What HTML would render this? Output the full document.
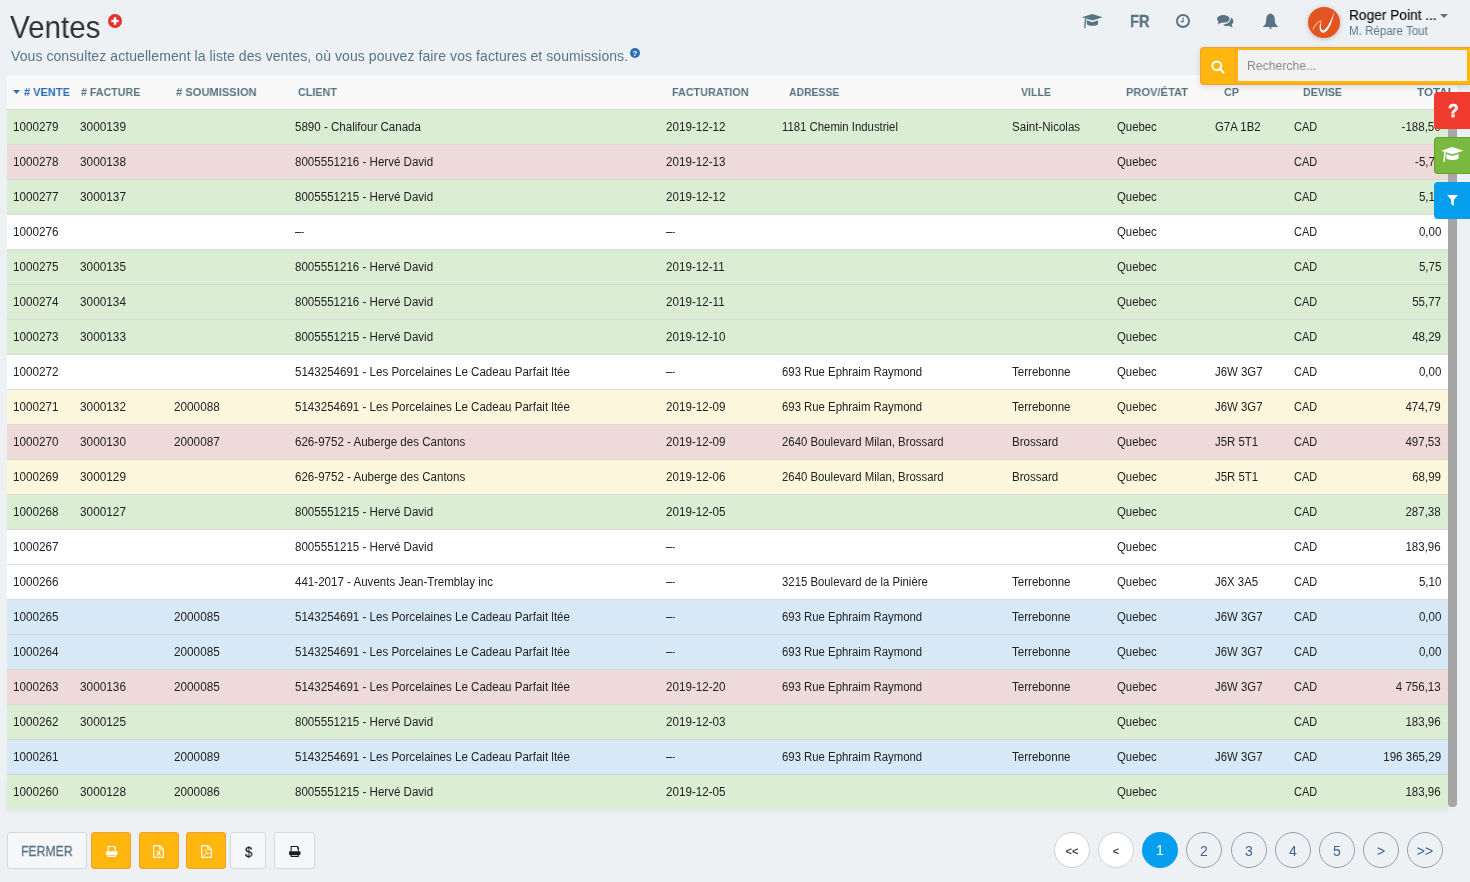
<!DOCTYPE html>
<html><head><meta charset="utf-8"><title>Ventes</title>
<style>
*{box-sizing:border-box}
html,body{margin:0;padding:0}
body{width:1470px;height:882px;overflow:hidden;background:#edf1f4;font-family:"Liberation Sans",sans-serif;position:relative;color:#222}
.a{position:absolute;white-space:nowrap;will-change:transform}
.row,.pg{will-change:transform}
.title{left:9.5px;top:9.2px;font-size:31.5px;line-height:36px;color:#333;transform:scaleX(0.94);transform-origin:0 0}
.sub{left:11px;top:47px;font-size:14px;line-height:18px;color:#587585;letter-spacing:0.08px}
.hdr{left:7px;top:75px;width:1450px;height:35px;background:#f9f9f9;border-bottom:1px solid #d6d6d6}
.hl{top:85px;font-size:11.7px;line-height:14px;font-weight:bold;color:#587382;transform-origin:0 0}
.row{position:absolute;left:7px;width:1441px;height:35px;border-bottom:1px solid #d9d9d9}
.g{background:#dbedd3}.r{background:#efdada}.y{background:#fbf6dc}.b{background:#d7e9f6}.w{background:#ffffff}
.c{position:absolute;top:10px;font-size:12px;line-height:14px;color:#222;white-space:nowrap;transform-origin:0 0}
.dash{position:absolute;top:7px;left:0;width:9px;height:1px;background:linear-gradient(90deg,#333 0,#333 6px,#999 6px,#999 7px,#333 7px)}
.tot{right:7px;text-align:right;transform:scaleX(0.962);transform-origin:100% 0}
.sb{left:1448px;top:110px;width:9px;height:697px;background:#a6a6a6;border-radius:0 0 4px 4px}
.btn{position:absolute;top:832px;height:37px;border-radius:3px}
.bw{background:#f5f7f9;border:1px solid #d3d9dd}
.bo{background:#ffb60f;border:1px solid #f0a032}
.pg{position:absolute;top:832px;width:36px;height:36px;border-radius:50%;text-align:center;line-height:36px;font-size:14px}
.pw{background:#fff;border:1px solid #d0d0d0;color:#444;font-weight:bold;font-size:11px}
.pn{border:1px solid #8fa0aa;color:#3f6190}
.pa{background:#069ff0;color:#fff}
.side{position:absolute;left:1434px;width:36px;height:37px;border-radius:4px 0 0 4px}
</style></head><body>
<div class="a title">Ventes</div>
<svg class="a" style="left:108.4px;top:14.1px" width="14" height="14" viewBox="0 0 14 14"><circle cx="7" cy="7" r="7" fill="#e8302c"/><rect x="3.2" y="5.8" width="7.6" height="2.4" fill="#fff"/><rect x="5.8" y="3.2" width="2.4" height="7.6" fill="#fff"/></svg>
<div class="a sub">Vous consultez actuellement la liste des ventes, où vous pouvez faire vos factures et soumissions.</div>
<svg class="a" style="left:630px;top:48px" width="10" height="10" viewBox="0 0 10 10"><circle cx="5" cy="5" r="5" fill="#2f6db5"/><text x="5" y="8.3" font-size="8" font-weight="bold" text-anchor="middle" fill="#fff" font-family="Liberation Sans">?</text></svg>
<div class="a hdr"></div>
<svg class="a" style="left:13px;top:90px" width="7" height="4" viewBox="0 0 7 4"><path d="M0 0H7L3.5 4Z" fill="#2f6db5"/></svg>
<div class="a hl" style="left:24.00px;color:#2f6db5;transform:scaleX(0.943)"># VENTE</div>
<div class="a hl" style="left:81.00px;color:#587382;transform:scaleX(0.912)"># FACTURE</div>
<div class="a hl" style="left:176.00px;color:#587382;transform:scaleX(0.954)"># SOUMISSION</div>
<div class="a hl" style="left:298.00px;color:#587382;transform:scaleX(0.924)">CLIENT</div>
<div class="a hl" style="left:672.00px;color:#587382;transform:scaleX(0.924)">FACTURATION</div>
<div class="a hl" style="left:789.00px;color:#587382;transform:scaleX(0.889)">ADRESSE</div>
<div class="a hl" style="left:1021.00px;color:#587382;transform:scaleX(0.904)">VILLE</div>
<div class="a hl" style="left:1126.00px;color:#587382;transform:scaleX(0.951)">PROV/ÉTAT</div>
<div class="a hl" style="left:1224.00px;color:#587382;transform:scaleX(0.920)">CP</div>
<div class="a hl" style="left:1303.00px;color:#587382;transform:scaleX(0.909)">DEVISE</div>
<div class="a hl" style="left:1417px">TOTAL</div>
<div class="row g" style="top:110px"><div class="c" style="left:6px;transform:scaleX(0.975)">1000279</div><div class="c" style="left:73px;transform:scaleX(0.985)">3000139</div><div class="c" style="left:288px;transform:scaleX(0.963)">5890 - Chalifour Canada</div><div class="c" style="left:659px;transform:scaleX(0.97)">2019-12-12</div><div class="c" style="left:775px;transform:scaleX(0.946)">1181 Chemin Industriel</div><div class="c" style="left:1005px;transform:scaleX(0.964)">Saint-Nicolas</div><div class="c" style="left:1110px;transform:scaleX(0.947)">Quebec</div><div class="c" style="left:1208px;transform:scaleX(0.95)">G7A 1B2</div><div class="c" style="left:1287px;transform:scaleX(0.91)">CAD</div><div class="c tot">-188,50</div></div>
<div class="row r" style="top:145px"><div class="c" style="left:6px;transform:scaleX(0.975)">1000278</div><div class="c" style="left:73px;transform:scaleX(0.985)">3000138</div><div class="c" style="left:288px;transform:scaleX(0.963)">8005551216 - Hervé David</div><div class="c" style="left:659px;transform:scaleX(0.97)">2019-12-13</div><div class="c" style="left:1110px;transform:scaleX(0.947)">Quebec</div><div class="c" style="left:1287px;transform:scaleX(0.91)">CAD</div><div class="c tot">-5,75</div></div>
<div class="row g" style="top:180px"><div class="c" style="left:6px;transform:scaleX(0.975)">1000277</div><div class="c" style="left:73px;transform:scaleX(0.985)">3000137</div><div class="c" style="left:288px;transform:scaleX(0.963)">8005551215 - Hervé David</div><div class="c" style="left:659px;transform:scaleX(0.97)">2019-12-12</div><div class="c" style="left:1110px;transform:scaleX(0.947)">Quebec</div><div class="c" style="left:1287px;transform:scaleX(0.91)">CAD</div><div class="c tot">5,10</div></div>
<div class="row w" style="top:215px"><div class="c" style="left:6px;transform:scaleX(0.975)">1000276</div><div class="c" style="left:288px;transform:scaleX(0.963)"><span class="dash"></span></div><div class="c" style="left:659px;transform:scaleX(0.97)"><span class="dash"></span></div><div class="c" style="left:1110px;transform:scaleX(0.947)">Quebec</div><div class="c" style="left:1287px;transform:scaleX(0.91)">CAD</div><div class="c tot">0,00</div></div>
<div class="row g" style="top:250px"><div class="c" style="left:6px;transform:scaleX(0.975)">1000275</div><div class="c" style="left:73px;transform:scaleX(0.985)">3000135</div><div class="c" style="left:288px;transform:scaleX(0.963)">8005551216 - Hervé David</div><div class="c" style="left:659px;transform:scaleX(0.97)">2019-12-11</div><div class="c" style="left:1110px;transform:scaleX(0.947)">Quebec</div><div class="c" style="left:1287px;transform:scaleX(0.91)">CAD</div><div class="c tot">5,75</div></div>
<div class="row g" style="top:285px"><div class="c" style="left:6px;transform:scaleX(0.975)">1000274</div><div class="c" style="left:73px;transform:scaleX(0.985)">3000134</div><div class="c" style="left:288px;transform:scaleX(0.963)">8005551216 - Hervé David</div><div class="c" style="left:659px;transform:scaleX(0.97)">2019-12-11</div><div class="c" style="left:1110px;transform:scaleX(0.947)">Quebec</div><div class="c" style="left:1287px;transform:scaleX(0.91)">CAD</div><div class="c tot">55,77</div></div>
<div class="row g" style="top:320px"><div class="c" style="left:6px;transform:scaleX(0.975)">1000273</div><div class="c" style="left:73px;transform:scaleX(0.985)">3000133</div><div class="c" style="left:288px;transform:scaleX(0.963)">8005551215 - Hervé David</div><div class="c" style="left:659px;transform:scaleX(0.97)">2019-12-10</div><div class="c" style="left:1110px;transform:scaleX(0.947)">Quebec</div><div class="c" style="left:1287px;transform:scaleX(0.91)">CAD</div><div class="c tot">48,29</div></div>
<div class="row w" style="top:355px"><div class="c" style="left:6px;transform:scaleX(0.975)">1000272</div><div class="c" style="left:288px;transform:scaleX(0.963)">5143254691 - Les Porcelaines Le Cadeau Parfait ltée</div><div class="c" style="left:659px;transform:scaleX(0.97)"><span class="dash"></span></div><div class="c" style="left:775px;transform:scaleX(0.946)">693 Rue Ephraim Raymond</div><div class="c" style="left:1005px;transform:scaleX(0.964)">Terrebonne</div><div class="c" style="left:1110px;transform:scaleX(0.947)">Quebec</div><div class="c" style="left:1208px;transform:scaleX(0.95)">J6W 3G7</div><div class="c" style="left:1287px;transform:scaleX(0.91)">CAD</div><div class="c tot">0,00</div></div>
<div class="row y" style="top:390px"><div class="c" style="left:6px;transform:scaleX(0.975)">1000271</div><div class="c" style="left:73px;transform:scaleX(0.985)">3000132</div><div class="c" style="left:167px;transform:scaleX(0.98)">2000088</div><div class="c" style="left:288px;transform:scaleX(0.963)">5143254691 - Les Porcelaines Le Cadeau Parfait ltée</div><div class="c" style="left:659px;transform:scaleX(0.97)">2019-12-09</div><div class="c" style="left:775px;transform:scaleX(0.946)">693 Rue Ephraim Raymond</div><div class="c" style="left:1005px;transform:scaleX(0.964)">Terrebonne</div><div class="c" style="left:1110px;transform:scaleX(0.947)">Quebec</div><div class="c" style="left:1208px;transform:scaleX(0.95)">J6W 3G7</div><div class="c" style="left:1287px;transform:scaleX(0.91)">CAD</div><div class="c tot">474,79</div></div>
<div class="row r" style="top:425px"><div class="c" style="left:6px;transform:scaleX(0.975)">1000270</div><div class="c" style="left:73px;transform:scaleX(0.985)">3000130</div><div class="c" style="left:167px;transform:scaleX(0.98)">2000087</div><div class="c" style="left:288px;transform:scaleX(0.963)">626-9752 - Auberge des Cantons</div><div class="c" style="left:659px;transform:scaleX(0.97)">2019-12-09</div><div class="c" style="left:775px;transform:scaleX(0.946)">2640 Boulevard Milan, Brossard</div><div class="c" style="left:1005px;transform:scaleX(0.964)">Brossard</div><div class="c" style="left:1110px;transform:scaleX(0.947)">Quebec</div><div class="c" style="left:1208px;transform:scaleX(0.95)">J5R 5T1</div><div class="c" style="left:1287px;transform:scaleX(0.91)">CAD</div><div class="c tot">497,53</div></div>
<div class="row y" style="top:460px"><div class="c" style="left:6px;transform:scaleX(0.975)">1000269</div><div class="c" style="left:73px;transform:scaleX(0.985)">3000129</div><div class="c" style="left:288px;transform:scaleX(0.963)">626-9752 - Auberge des Cantons</div><div class="c" style="left:659px;transform:scaleX(0.97)">2019-12-06</div><div class="c" style="left:775px;transform:scaleX(0.946)">2640 Boulevard Milan, Brossard</div><div class="c" style="left:1005px;transform:scaleX(0.964)">Brossard</div><div class="c" style="left:1110px;transform:scaleX(0.947)">Quebec</div><div class="c" style="left:1208px;transform:scaleX(0.95)">J5R 5T1</div><div class="c" style="left:1287px;transform:scaleX(0.91)">CAD</div><div class="c tot">68,99</div></div>
<div class="row g" style="top:495px"><div class="c" style="left:6px;transform:scaleX(0.975)">1000268</div><div class="c" style="left:73px;transform:scaleX(0.985)">3000127</div><div class="c" style="left:288px;transform:scaleX(0.963)">8005551215 - Hervé David</div><div class="c" style="left:659px;transform:scaleX(0.97)">2019-12-05</div><div class="c" style="left:1110px;transform:scaleX(0.947)">Quebec</div><div class="c" style="left:1287px;transform:scaleX(0.91)">CAD</div><div class="c tot">287,38</div></div>
<div class="row w" style="top:530px"><div class="c" style="left:6px;transform:scaleX(0.975)">1000267</div><div class="c" style="left:288px;transform:scaleX(0.963)">8005551215 - Hervé David</div><div class="c" style="left:659px;transform:scaleX(0.97)"><span class="dash"></span></div><div class="c" style="left:1110px;transform:scaleX(0.947)">Quebec</div><div class="c" style="left:1287px;transform:scaleX(0.91)">CAD</div><div class="c tot">183,96</div></div>
<div class="row w" style="top:565px"><div class="c" style="left:6px;transform:scaleX(0.975)">1000266</div><div class="c" style="left:288px;transform:scaleX(0.963)">441-2017 - Auvents Jean-Tremblay inc</div><div class="c" style="left:659px;transform:scaleX(0.97)"><span class="dash"></span></div><div class="c" style="left:775px;transform:scaleX(0.946)">3215 Boulevard de la Pinière</div><div class="c" style="left:1005px;transform:scaleX(0.964)">Terrebonne</div><div class="c" style="left:1110px;transform:scaleX(0.947)">Quebec</div><div class="c" style="left:1208px;transform:scaleX(0.95)">J6X 3A5</div><div class="c" style="left:1287px;transform:scaleX(0.91)">CAD</div><div class="c tot">5,10</div></div>
<div class="row b" style="top:600px"><div class="c" style="left:6px;transform:scaleX(0.975)">1000265</div><div class="c" style="left:167px;transform:scaleX(0.98)">2000085</div><div class="c" style="left:288px;transform:scaleX(0.963)">5143254691 - Les Porcelaines Le Cadeau Parfait ltée</div><div class="c" style="left:659px;transform:scaleX(0.97)"><span class="dash"></span></div><div class="c" style="left:775px;transform:scaleX(0.946)">693 Rue Ephraim Raymond</div><div class="c" style="left:1005px;transform:scaleX(0.964)">Terrebonne</div><div class="c" style="left:1110px;transform:scaleX(0.947)">Quebec</div><div class="c" style="left:1208px;transform:scaleX(0.95)">J6W 3G7</div><div class="c" style="left:1287px;transform:scaleX(0.91)">CAD</div><div class="c tot">0,00</div></div>
<div class="row b" style="top:635px"><div class="c" style="left:6px;transform:scaleX(0.975)">1000264</div><div class="c" style="left:167px;transform:scaleX(0.98)">2000085</div><div class="c" style="left:288px;transform:scaleX(0.963)">5143254691 - Les Porcelaines Le Cadeau Parfait ltée</div><div class="c" style="left:659px;transform:scaleX(0.97)"><span class="dash"></span></div><div class="c" style="left:775px;transform:scaleX(0.946)">693 Rue Ephraim Raymond</div><div class="c" style="left:1005px;transform:scaleX(0.964)">Terrebonne</div><div class="c" style="left:1110px;transform:scaleX(0.947)">Quebec</div><div class="c" style="left:1208px;transform:scaleX(0.95)">J6W 3G7</div><div class="c" style="left:1287px;transform:scaleX(0.91)">CAD</div><div class="c tot">0,00</div></div>
<div class="row r" style="top:670px"><div class="c" style="left:6px;transform:scaleX(0.975)">1000263</div><div class="c" style="left:73px;transform:scaleX(0.985)">3000136</div><div class="c" style="left:167px;transform:scaleX(0.98)">2000085</div><div class="c" style="left:288px;transform:scaleX(0.963)">5143254691 - Les Porcelaines Le Cadeau Parfait ltée</div><div class="c" style="left:659px;transform:scaleX(0.97)">2019-12-20</div><div class="c" style="left:775px;transform:scaleX(0.946)">693 Rue Ephraim Raymond</div><div class="c" style="left:1005px;transform:scaleX(0.964)">Terrebonne</div><div class="c" style="left:1110px;transform:scaleX(0.947)">Quebec</div><div class="c" style="left:1208px;transform:scaleX(0.95)">J6W 3G7</div><div class="c" style="left:1287px;transform:scaleX(0.91)">CAD</div><div class="c tot">4 756,13</div></div>
<div class="row g" style="top:705px"><div class="c" style="left:6px;transform:scaleX(0.975)">1000262</div><div class="c" style="left:73px;transform:scaleX(0.985)">3000125</div><div class="c" style="left:288px;transform:scaleX(0.963)">8005551215 - Hervé David</div><div class="c" style="left:659px;transform:scaleX(0.97)">2019-12-03</div><div class="c" style="left:1110px;transform:scaleX(0.947)">Quebec</div><div class="c" style="left:1287px;transform:scaleX(0.91)">CAD</div><div class="c tot">183,96</div></div>
<div class="row b" style="top:740px"><div class="c" style="left:6px;transform:scaleX(0.975)">1000261</div><div class="c" style="left:167px;transform:scaleX(0.98)">2000089</div><div class="c" style="left:288px;transform:scaleX(0.963)">5143254691 - Les Porcelaines Le Cadeau Parfait ltée</div><div class="c" style="left:659px;transform:scaleX(0.97)"><span class="dash"></span></div><div class="c" style="left:775px;transform:scaleX(0.946)">693 Rue Ephraim Raymond</div><div class="c" style="left:1005px;transform:scaleX(0.964)">Terrebonne</div><div class="c" style="left:1110px;transform:scaleX(0.947)">Quebec</div><div class="c" style="left:1208px;transform:scaleX(0.95)">J6W 3G7</div><div class="c" style="left:1287px;transform:scaleX(0.91)">CAD</div><div class="c tot">196 365,29</div></div>
<div class="row g" style="top:775px;border-bottom:none;height:34px;box-shadow:0 3px 4px rgba(0,0,0,0.05)"><div class="c" style="left:6px;transform:scaleX(0.975)">1000260</div><div class="c" style="left:73px;transform:scaleX(0.985)">3000128</div><div class="c" style="left:167px;transform:scaleX(0.98)">2000086</div><div class="c" style="left:288px;transform:scaleX(0.963)">8005551215 - Hervé David</div><div class="c" style="left:659px;transform:scaleX(0.97)">2019-12-05</div><div class="c" style="left:1110px;transform:scaleX(0.947)">Quebec</div><div class="c" style="left:1287px;transform:scaleX(0.91)">CAD</div><div class="c tot">183,96</div></div>
<div class="a sb"></div>
<svg class="a" style="left:1082px;top:14px" width="21.00" height="14.00" viewBox="0 0 21 14">
<path d="M0 3.3L10.3 0L20.6 3.3L10.3 6.5Z" fill="#587482"/>
<path d="M4.9 6.3L10.3 8.2L16 6.3V10C16 11.2 13.4 11.8 10.45 11.8C7.5 11.8 4.9 11.2 4.9 10Z" fill="#587482"/>
<path d="M3.6 4.6L2.9 12.3" stroke="#587482" stroke-width="1.4"/>
<path d="M2.9 11.5L1.8 13.9H3.9Z" fill="#587482"/>
</svg>
<div class="a" style="left:1130px;top:11px;font-size:17.3px;line-height:20px;font-weight:bold;color:#587482;transform:scaleX(0.85);transform-origin:0 0;-webkit-text-stroke:0.3px #587482">FR</div>
<svg class="a" style="left:1176px;top:14px" width="14" height="14" viewBox="0 0 14 14">
<circle cx="7" cy="7" r="6.05" fill="none" stroke="#587482" stroke-width="1.9"/>
<path d="M7.2 3.6V7.6H4.6" fill="none" stroke="#587482" stroke-width="1.1"/>
</svg>
<svg class="a" style="left:1217px;top:15px" width="17" height="13" viewBox="0 0 17 13">
<ellipse cx="6.3" cy="3.9" rx="6.3" ry="3.9" fill="#587482"/>
<path d="M1.6 6L0.8 9.3L5 7.5Z" fill="#587482"/>
<path d="M13.8 2.6C15.6 3.5 16.3 4.6 16.3 6.2C16.3 7.5 15.7 8.5 14.8 9.3L15.4 12.8L12.4 10.8C11.8 11 11.1 11.1 10.3 11.1C8.6 11.1 7.2 10.5 6.3 9.5C10.8 9.3 14.2 6.5 13.8 2.6Z" fill="#587482"/>
</svg>
<svg class="a" style="left:1263px;top:13px" width="15" height="16" viewBox="0 0 15 16">
<path d="M7.5 0.2C8.1 0.2 8.4 0.6 8.4 1.1C10.8 1.6 11.8 3.6 11.8 6.6C11.8 10 12.6 12 15 13.6V14.1H0V13.6C2.4 12 3.2 10 3.2 6.6C3.2 3.6 4.2 1.6 6.6 1.1C6.6 0.6 6.9 0.2 7.5 0.2Z" fill="#587482"/>
<path d="M5.9 14.6C6.1 15.5 6.7 16 7.5 16C8.3 16 8.9 15.5 9.1 14.6Z" fill="#587482"/>
</svg>
<div class="a" style="left:1308px;top:7px;width:32px;height:31px;border-radius:50%;background:#e25420;box-shadow:0 1px 5px rgba(0,0,0,0.22)"></div>
<svg class="a" style="left:1308px;top:7px" width="32" height="31" viewBox="0 0 32 31">
<path d="M4.9 22.4C7 18 10 14.6 12.6 13.8L13.4 15" fill="none" stroke="#fff" stroke-width="0.8"/>
<path d="M13.4 14.6C11.2 17.6 10.9 22.6 13.2 25C15.6 27.4 19.8 24.2 22.2 18.6C24.2 14 25.6 9 26.4 4.2C24.9 9 22.9 13.5 20.6 17.6C18.3 21.9 15.8 24.1 14.3 23.3C12.7 22.3 12.5 18.2 13.4 14.6Z" fill="#fff"/>
</svg>
<div class="a" style="left:1349px;top:7px;font-size:14px;line-height:16px;color:#111;-webkit-text-stroke:0.2px #111;transform:scaleX(0.98);transform-origin:0 0">Roger Point ...</div>
<svg class="a" style="left:1440px;top:14px" width="8" height="4" viewBox="0 0 8 4"><path d="M0 0H8L4 4Z" fill="#587482"/></svg>
<div class="a" style="left:1349px;top:24px;font-size:12px;line-height:14px;color:#5b7888;transform:scaleX(0.963);transform-origin:0 0">M. Répare Tout</div>
<div class="a" style="left:1200px;top:47px;width:270px;height:38px;background:#ffb60f;border:1px solid #f0a032;border-right:none;border-radius:4px 0 0 4px;box-shadow:0 2px 6px rgba(0,0,0,0.12)"></div>
<div class="a" style="left:1235px;top:47px;width:1px;height:38px;background:#f0a032"></div>
<div class="a" style="left:1238px;top:50px;width:229px;height:31px;background:#f2f2f2"></div>
<svg class="a" style="left:1211px;top:60px" width="14" height="14" viewBox="0 0 14 14"><circle cx="5.8" cy="5.8" r="4.4" fill="none" stroke="#fff" stroke-width="2"/><path d="M8.8 8.8L12.5 12.5" stroke="#fff" stroke-width="2.2" stroke-linecap="round"/></svg>
<div class="a" style="left:1247px;top:59px;font-size:12.5px;line-height:14px;color:#8a8a8a;transform:scaleX(0.977);transform-origin:0 0">Recherche...</div>
<div class="side" style="top:92px;background:#f03a2e"></div>
<div class="a" style="left:1448px;top:100px;font-size:17.5px;line-height:22px;font-weight:bold;color:#fff;-webkit-text-stroke:0.5px #fff">?</div>
<div class="side" style="top:137px;background:#7ab83f;border:1px solid #5fa52c;border-right:none"></div>
<svg class="a" style="left:1440.5px;top:147.4px" width="23.10" height="15.40" viewBox="0 0 21 14">
<path d="M0 3.3L10.3 0L20.6 3.3L10.3 6.5Z" fill="#fff"/>
<path d="M4.9 6.3L10.3 8.2L16 6.3V10C16 11.2 13.4 11.8 10.45 11.8C7.5 11.8 4.9 11.2 4.9 10Z" fill="#fff"/>
<path d="M3.6 4.6L2.9 12.3" stroke="#fff" stroke-width="1.4"/>
<path d="M2.9 11.5L1.8 13.9H3.9Z" fill="#fff"/>
</svg>
<div class="side" style="top:182px;background:#069ff0"></div>
<svg class="a" style="left:1447px;top:195px" width="11" height="11" viewBox="0 0 11 11"><path d="M0 0H11L6.8 4.8V11L4.2 9V4.8Z" fill="#fff"/></svg>
<div class="btn bw" style="left:7px;width:80px"></div>
<div class="a" style="left:21px;top:843px;font-size:14.5px;line-height:17px;color:#587382;transform:scaleX(0.843);transform-origin:0 0;-webkit-text-stroke:0.3px #587382">FERMER</div>
<div class="btn bo" style="left:91px;width:40px"></div>
<div class="btn bo" style="left:139px;width:40px"></div>
<div class="btn bo" style="left:186px;width:40px"></div>
<div class="btn bw" style="left:230px;width:36px"></div>
<div class="btn bw" style="left:274px;width:41px"></div>
<svg class="a" style="left:105.5px;top:846px" width="12" height="11" viewBox="0 0 12 11">
<path d="M2.15 5.4V0.55H8.3L9.3 1.55V5.4" fill="none" stroke="#fff" stroke-width="1.1"/>
<path d="M8.2 0.5L9.4 1.7V3H8.2Z" fill="#fff"/>
<rect x="0" y="5.2" width="11.5" height="3.7" rx="0.9" fill="#fff"/>
<path d="M2.15 8.5V10.4H9.3V8.5" fill="none" stroke="#fff" stroke-width="1.1"/>
</svg>
<svg class="a" style="left:288.5px;top:846px" width="12" height="11" viewBox="0 0 12 11">
<path d="M2.15 5.4V0.55H8.3L9.3 1.55V5.4" fill="none" stroke="#1e1e1e" stroke-width="1.1"/>
<path d="M8.2 0.5L9.4 1.7V3H8.2Z" fill="#1e1e1e"/>
<rect x="0" y="5.2" width="11.5" height="3.7" rx="0.9" fill="#1e1e1e"/>
<path d="M2.15 8.5V10.4H9.3V8.5" fill="none" stroke="#1e1e1e" stroke-width="1.1"/>
</svg>
<svg class="a" style="left:153px;top:845px" width="11" height="13" viewBox="0 0 11 13">
<path d="M0.65 0.65H6.8L10.35 4.2V12.35H0.65Z" fill="none" stroke="#fff" stroke-width="1.2" stroke-linejoin="round"/>
<path d="M6.8 0.8V4.2H10.2" fill="none" stroke="#fff" stroke-width="1.1"/>
<path d="M3.9 5.9L7.6 10.7M7.4 5.9L3.7 10.7" stroke="#fff" stroke-width="1.1"/>
</svg>
<svg class="a" style="left:201px;top:845px" width="11" height="13" viewBox="0 0 11 13">
<path d="M0.65 0.65H6.8L10.35 4.2V12.35H0.65Z" fill="none" stroke="#fff" stroke-width="1.2" stroke-linejoin="round"/>
<path d="M6.8 0.8V4.2H10.2" fill="none" stroke="#fff" stroke-width="1.1"/>
<path d="M4.5 4.3C4.6 6 5 7.3 5.8 8.2C6.5 8.5 7.3 8.5 8.4 8.4M5.8 8.2C4.8 9 3.5 10 2.4 10.8" fill="none" stroke="#fff" stroke-width="0.9"/>
</svg>
<div class="a" style="left:244.5px;top:843px;font-size:15px;line-height:17px;color:#222;-webkit-text-stroke:0.25px #222;transform:scaleX(0.9);transform-origin:0 0">$</div>
<div class="pg pw" style="left:1054px">&lt;&lt;</div>
<div class="pg pw" style="left:1098px">&lt;</div>
<div class="pg pa" style="left:1142px">1</div>
<div class="pg pn" style="left:1186px">2</div>
<div class="pg pn" style="left:1231px">3</div>
<div class="pg pn" style="left:1275px">4</div>
<div class="pg pn" style="left:1319px">5</div>
<div class="pg pn" style="left:1363px">&gt;</div>
<div class="pg pn" style="left:1407px">&gt;&gt;</div>
</body></html>
